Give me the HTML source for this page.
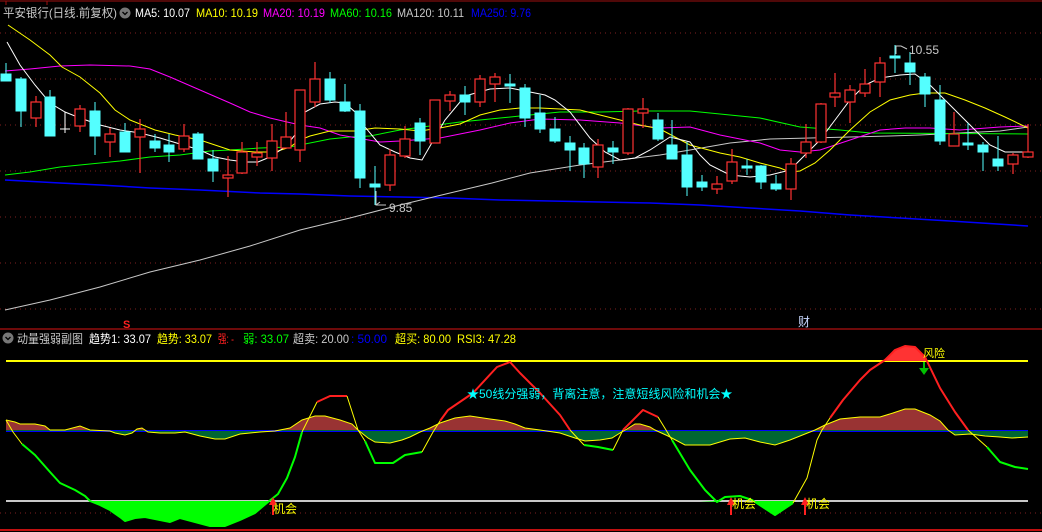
<!DOCTYPE html>
<html><head><meta charset="utf-8"><style>
html,body{margin:0;padding:0;background:#000;width:1042px;height:532px;overflow:hidden}
svg{display:block}
text{font-family:"Liberation Sans","Noto Sans CJK SC",sans-serif;font-size:12px}
</style></head><body>
<svg width="1042" height="532" viewBox="0 0 1042 532" xmlns="http://www.w3.org/2000/svg">
<rect width="1042" height="532" fill="#000"/>
<path d="M0 1H1042" stroke="#a01010" stroke-width="1"/>
<path d="M6 1V5M47 1V5" stroke="#a01010"/>
<g stroke="#802020" stroke-dasharray="1,4" stroke-width="1">
<path d="M0 33H1042M0 79H1042M0 125H1042M0 171H1042M0 217H1042M0 263H1042M0 309H1042"/>
<path d="M0 513H1042"/>
</g>
<text x="3" y="17" fill="#c8c8c8" textLength="114" lengthAdjust="spacingAndGlyphs">平安银行(日线.前复权)</text>
<circle cx="125" cy="13" r="5.5" fill="#777"/><path d="M122.5 12l2.5 2.5 2.5-2.5" stroke="#000" fill="none" stroke-width="1.3"/>
<text x="135" y="17" fill="#fff" textLength="55" lengthAdjust="spacingAndGlyphs">MA5: 10.07</text>
<text x="196" y="17" fill="#ffff00" textLength="62" lengthAdjust="spacingAndGlyphs">MA10: 10.19</text>
<text x="263" y="17" fill="#ff00ff" textLength="62" lengthAdjust="spacingAndGlyphs">MA20: 10.19</text>
<text x="330" y="17" fill="#00ff00" textLength="62" lengthAdjust="spacingAndGlyphs">MA60: 10.16</text>
<text x="397" y="17" fill="#c8c8c8" textLength="67" lengthAdjust="spacingAndGlyphs">MA120: 10.11</text>
<text x="471" y="17" fill="#0000ff" textLength="60" lengthAdjust="spacingAndGlyphs">MA250: 9.76</text>

<g fill="none" stroke-width="1">
<polyline stroke="#0000ff" stroke-width="1.5" points="5,180 60,183 100,185 150,188 200,190 260,193 300,194 350,196 400,197 450,198 500,200 550,201 600,202 650,203 700,205 750,208 800,211 850,215 900,218 950,221 1028,226"/>
<polyline stroke="#c8c8c8" points="5,310 50,300 100,287 150,272 200,260 250,246 300,230 350,218 400,205 450,193 492,183 530,173 580,165 620,160 660,155 690,150 730,143 770,139 810,138 850,137 890,136 920,135 960,133 1000,131 1028,127"/>
<polyline stroke="#00ff00" points="5,175 30,172 60,167 90,164 120,161 150,157 180,155 210,151 230,150 260,148 290,147 310,143 330,139 350,137 370,136 400,130 430,126 460,122 490,119 520,116 560,112 600,112 640,111 690,111 720,114 760,118 800,127 840,130 870,133 1028,134"/>
<polyline stroke="#ff00ff" points="5,71 30,69 60,66 90,65 130,66 150,69 170,77 200,90 230,103 250,112 270,118 300,125 320,128 340,135 380,142 400,141 440,138 480,130 510,123 540,119 580,120 620,123 660,128 690,127 720,135 760,143 780,150 800,152 820,150 850,140 880,130 905,128 930,128 960,130 1000,127 1028,126"/>
<polyline stroke="#ffff00" points="8,25 30,40 50,55 62,67 80,77 100,93 115,110 130,120 155,130 175,135 200,140 230,150 255,152 275,152 290,147 300,140 310,136 330,131 355,131 375,128 400,129 420,131 440,128 460,124 480,115 500,110 520,108 540,108 560,109 580,110 600,115 620,120 640,125 660,129 690,145 720,153 740,157 760,163 780,168 790,172 800,171 815,163 830,150 850,130 870,112 890,100 910,95 925,93 945,93 965,100 985,108 1005,117 1028,128"/>
<polyline stroke="#fff" points="7,42 20,65 35,85 50,103 65,112 80,118 100,125 120,130 140,133 160,138 180,144 200,150 215,157 230,160 245,162 258,162 270,157 285,147 295,135 305,112 320,104 335,102 345,103 355,112 365,127 380,145 395,152 410,158 422,160 445,120 465,96 490,89 510,88 530,92 545,95 555,100 570,112 590,138 605,152 620,160 635,158 650,150 670,137 690,142 700,155 710,165 730,175 750,177 770,175 790,170 805,155 820,140 835,120 850,100 865,85 880,78 900,75 915,74 930,85 950,105 970,125 990,145 1005,152 1028,152"/>
</g>

<g stroke="#54ffff" fill="#54ffff" stroke-width="1">
<path d="M6 63V81M21 77V127M50 90V136M95 102V155M125 123V152M155 134V152M169 134V162M198 132V159M213 150V182M330 72V103M345 84V112M360 104V188M375 166V205M420 118V155M465 86V115M510 74V103M525 84V127M540 95V133M555 117V143M570 136V171M584 143V178M613 141V164M658 113V141M672 120V159M687 142V196M702 175V191M747 159V175M761 165V189M776 175V191M895 45V73M910 52V85M925 73V107M940 85V145M968 123V150M983 142V171M998 136V171"/>
<rect x="1" y="74" width="10" height="7"/><rect x="16" y="79" width="10" height="32"/><rect x="45" y="97" width="10" height="39"/><rect x="90" y="111" width="10" height="25"/><rect x="120" y="132" width="10" height="20"/><rect x="150" y="141" width="10" height="7"/><rect x="164" y="145" width="10" height="7"/><rect x="193" y="134" width="10" height="25"/><rect x="208" y="159" width="10" height="12"/><rect x="325" y="79" width="10" height="21"/><rect x="340" y="102" width="10" height="9"/><rect x="355" y="111" width="10" height="67"/><rect x="370" y="184" width="10" height="3"/><rect x="415" y="123" width="10" height="18"/><rect x="460" y="95" width="10" height="7"/><rect x="505" y="84" width="10" height="2"/><rect x="520" y="88" width="10" height="30"/><rect x="535" y="113" width="10" height="16"/><rect x="550" y="129" width="10" height="12"/><rect x="565" y="143" width="10" height="7"/><rect x="579" y="148" width="10" height="16"/><rect x="608" y="148" width="10" height="4"/><rect x="653" y="120" width="10" height="19"/><rect x="667" y="145" width="10" height="14"/><rect x="682" y="155" width="10" height="32"/><rect x="697" y="182" width="10" height="5"/><rect x="742" y="166" width="10" height="2"/><rect x="756" y="166" width="10" height="16"/><rect x="771" y="184" width="10" height="5"/><rect x="890" y="56" width="10" height="2"/><rect x="905" y="63" width="10" height="9"/><rect x="920" y="77" width="10" height="17"/><rect x="935" y="100" width="10" height="41"/><rect x="963" y="143" width="10" height="2"/><rect x="978" y="145" width="10" height="7"/><rect x="993" y="159" width="10" height="7"/>
</g>
<path d="M65 112V133M60 129H70" stroke="#fff"/>
<g stroke="#ff3232" fill="#000" stroke-width="1.2">
<path d="M36 96V127M80 105V132M110 128V157M140 119V173M184 124V152M228 156V197M242 142V174M257 142V166M272 124V171M286 112V148M300 90V162M315 62V107M390 149V191M405 126V158M435 100V143M450 91V111M480 75V107M495 73V102M598 139V178M628 108V155M643 98V128M717 176V194M732 149V184M791 158V200M806 124V158M821 103V143M835 73V107M850 85V123M865 69V97M880 57V97M954 112V146M1013 153V174M1028 124V158"/>
<rect x="31" y="102" width="10" height="16"/><rect x="75" y="109" width="10" height="17"/><rect x="105" y="134" width="10" height="8"/><rect x="135" y="129" width="10" height="8"/><rect x="179" y="136" width="10" height="13"/><rect x="223" y="175" width="10" height="3"/><rect x="237" y="152" width="10" height="21"/><rect x="252" y="153" width="10" height="4"/><rect x="267" y="141" width="10" height="17"/><rect x="281" y="137" width="10" height="11"/><rect x="295" y="90" width="10" height="60"/><rect x="310" y="79" width="10" height="23"/><rect x="385" y="155" width="10" height="30"/><rect x="400" y="139" width="10" height="17"/><rect x="430" y="100" width="10" height="43"/><rect x="445" y="95" width="10" height="6"/><rect x="475" y="79" width="10" height="23"/><rect x="490" y="77" width="10" height="7"/><rect x="593" y="145" width="10" height="22"/><rect x="623" y="109" width="10" height="44"/><rect x="638" y="109" width="10" height="4"/><rect x="712" y="184" width="10" height="5"/><rect x="727" y="162" width="10" height="19"/><rect x="786" y="164" width="10" height="25"/><rect x="801" y="142" width="10" height="11"/><rect x="816" y="104" width="10" height="38"/><rect x="830" y="93" width="10" height="4"/><rect x="845" y="90" width="10" height="12"/><rect x="860" y="84" width="10" height="9"/><rect x="875" y="63" width="10" height="19"/><rect x="949" y="134" width="10" height="12"/><rect x="1008" y="155" width="10" height="9"/><rect x="1023" y="152" width="10" height="5"/>
</g>
<path d="M376 191V205H386M376 205l4-3" stroke="#c8c8c8" fill="none"/>
<text x="389" y="212" fill="#c8c8c8">9.85</text>
<path d="M896 54V46H901l6 3" stroke="#c8c8c8" fill="none"/>
<text x="909" y="54" fill="#c8c8c8">10.55</text>
<text x="123" y="328" fill="#ff2020" font-weight="bold" style="font-size:11px">S</text>
<text x="798" y="326" fill="#c8d8ff" style="font-size:12px">财</text>
<path d="M0 329H1042" stroke="#b01010" stroke-width="1.2"/>
<path d="M0 530H1042" stroke="#c01010" stroke-width="2"/>

<circle cx="8" cy="338" r="5.5" fill="#777"/><path d="M5.5 337l2.5 2.5 2.5-2.5" stroke="#000" fill="none" stroke-width="1.3"/>
<text x="17" y="343" fill="#c8c8c8" textLength="66" lengthAdjust="spacingAndGlyphs">动量强弱副图</text>
<text x="89" y="343" fill="#fff" textLength="62" lengthAdjust="spacingAndGlyphs">趋势1: 33.07</text>
<text x="157" y="343" fill="#ffff00" textLength="55" lengthAdjust="spacingAndGlyphs">趋势: 33.07</text>
<text x="218" y="343" fill="#ff2020" textLength="16" lengthAdjust="spacingAndGlyphs">强: -</text>
<text x="243" y="343" fill="#00ff00" textLength="46" lengthAdjust="spacingAndGlyphs">弱: 33.07</text>
<text x="293" y="343" fill="#c8c8c8" textLength="56" lengthAdjust="spacingAndGlyphs">超卖: 20.00</text>
<text x="351" y="343" fill="#0000ff" textLength="36" lengthAdjust="spacingAndGlyphs">: 50.00</text>
<text x="395" y="343" fill="#ffff00" textLength="56" lengthAdjust="spacingAndGlyphs">超买: 80.00</text>
<text x="457" y="343" fill="#ffff00" textLength="59" lengthAdjust="spacingAndGlyphs">RSI3: 47.28</text>

<defs>
<clipPath id="ab"><rect x="0" y="350" width="1042" height="81"/></clipPath>
<clipPath id="be"><rect x="0" y="430" width="1042" height="80"/></clipPath>
<clipPath id="lo"><rect x="0" y="501" width="1042" height="30"/></clipPath>
<clipPath id="hi"><rect x="0" y="330" width="1042" height="31"/></clipPath>
</defs>
<path d="M6 431H1028" stroke="#0000ff" stroke-width="2"/>
<g>
<polygon clip-path="url(#ab)" fill="#993333" points="6,431 6,420 15,422 20,424 35,424 45,426 50,430 65,430 80,426 90,430 110,431 115,433 125,435 132,433 137,429 142,428 148,432 160,433 175,433 185,432 200,436 215,439 225,439 240,434 260,432 275,431 290,428 302,420 315,416 325,416 340,420 352,424 358,430 368,438 375,442 390,443 402,440 410,437 420,432 430,428 440,423 455,418 470,416 490,419 505,421 515,424 525,428 540,430 560,433 575,438 585,441 600,440 612,438 620,433 627,429 635,424 640,424 650,427 655,430 668,436 685,445 710,445 730,439 745,438 760,442 775,445 790,440 805,434 815,430 825,425 840,419 860,417 880,417 893,413 905,409 915,409 930,415 940,421 948,430 955,435 970,434 985,436 1000,437 1012,438 1028,437 1028,431"/>
<polygon clip-path="url(#be)" fill="#006633" points="6,431 6,420 15,422 20,424 35,424 45,426 50,430 65,430 80,426 90,430 110,431 115,433 125,435 132,433 137,429 142,428 148,432 160,433 175,433 185,432 200,436 215,439 225,439 240,434 260,432 275,431 290,428 302,420 315,416 325,416 340,420 352,424 358,430 368,438 375,442 390,443 402,440 410,437 420,432 430,428 440,423 455,418 470,416 490,419 505,421 515,424 525,428 540,430 560,433 575,438 585,441 600,440 612,438 620,433 627,429 635,424 640,424 650,427 655,430 668,436 685,445 710,445 730,439 745,438 760,442 775,445 790,440 805,434 815,430 825,425 840,419 860,417 880,417 893,413 905,409 915,409 930,415 940,421 948,430 955,435 970,434 985,436 1000,437 1012,438 1028,437 1028,431"/>
<polyline fill="none" stroke="#ffff00" stroke-width="1" points="6,420 15,422 20,424 35,424 45,426 50,430 65,430 80,426 90,430 110,431 115,433 125,435 132,433 137,429 142,428 148,432 160,433 175,433 185,432 200,436 215,439 225,439 240,434 260,432 275,431 290,428 302,420 315,416 325,416 340,420 352,424 358,430 368,438 375,442 390,443 402,440 410,437 420,432 430,428 440,423 455,418 470,416 490,419 505,421 515,424 525,428 540,430 560,433 575,438 585,441 600,440 612,438 620,433 627,429 635,424 640,424 650,427 655,430 668,436 685,445 710,445 730,439 745,438 760,442 775,445 790,440 805,434 815,430 825,425 840,419 860,417 880,417 893,413 905,409 915,409 930,415 940,421 948,430 955,435 970,434 985,436 1000,437 1012,438 1028,437"/>
</g>
<path d="M6 361H1028" stroke="#ffff00" stroke-width="2"/>
<path d="M6 501H1028" stroke="#c8c8c8" stroke-width="2"/>
<polygon clip-path="url(#lo)" fill="#00ff00" points="22,444 35,455 50,472 60,483 75,490 85,496 90,501 100,505 110,510 120,517 125,521 135,518 145,517 160,520 170,522 180,518 195,522 210,526 225,526 240,520 255,513 268,502 278,494 278,501 700,501 717,502 725,497 740,496 752,500 775,515 793,503 800,496 800,501 22,501"/>
<polygon clip-path="url(#hi)" fill="#ff3333" points="870,370 885,360 895,350 905,346 915,347 925,357 940,388 870,388"/>
<g fill="none" stroke-linejoin="round">
<polyline stroke="#ffff00" stroke-width="1" points="6,420 13,432 22,444"/>
<polyline stroke="#00ff00" stroke-width="2" points="22,444 35,455 50,472 60,483 75,490 85,496 90,501 100,505 110,510 120,517 125,521 135,518 145,517 160,520 170,522 180,518 195,522 210,526 225,526 240,520 255,513 268,502 278,494 287,478 295,457 302,432"/>
<polyline stroke="#ffff00" stroke-width="1" points="302,432 317,402"/>
<polyline stroke="#ff2020" stroke-width="2" points="317,402 330,396 347,396"/>
<polyline stroke="#ffff00" stroke-width="1" points="347,396 358,430 365,441"/>
<polyline stroke="#00ff00" stroke-width="2" points="365,441 375,463 393,463 405,455 422,452"/>
<polyline stroke="#ffff00" stroke-width="1" points="422,452 433,432 440,421"/>
<polyline stroke="#ff2020" stroke-width="2" points="440,421 448,410 473,393 497,367 510,362 520,373 540,393 560,415 570,430"/>
<polyline stroke="#ffff00" stroke-width="1" points="570,430 584,445"/>
<polyline stroke="#00ff00" stroke-width="2" points="584,445 598,447 613,450"/>
<polyline stroke="#ffff00" stroke-width="1" points="613,450 623,430"/>
<polyline stroke="#ff2020" stroke-width="2" points="623,430 643,410 658,417"/>
<polyline stroke="#ffff00" stroke-width="1" points="658,417 666,430 672,440"/>
<polyline stroke="#00ff00" stroke-width="2" points="672,440 690,470 705,490 717,502 725,497 740,496 752,500 775,515 793,503"/>
<polyline stroke="#ffff00" stroke-width="1" points="793,503 807,478 817,440 822,430 830,418"/>
<polyline stroke="#ff2020" stroke-width="2" points="830,418 843,400 860,380 870,370 885,360 895,350 905,346 915,347 925,357 940,388 955,412 968,430"/>
<polyline stroke="#ffff00" stroke-width="1" points="968,430 987,447"/>
<polyline stroke="#00ff00" stroke-width="2" points="987,447 1000,462 1015,467 1028,469"/>
</g>
<text x="467" y="398" fill="#00ffff">★50线分强弱，背离注意，注意短线风险和机会★</text>
<text x="923" y="357" fill="#ffff00" style="font-size:11px">风险</text>
<path d="M924 362V370" stroke="#00c000" stroke-width="2"/><path d="M919 368L924 375L929 368Z" fill="#00c000"/>
<g fill="#ff2020" stroke="#ff2020" stroke-width="2">
<path d="M273 503V515M731 503V515M805 503V515"/>
<path d="M269 505L273 497L277 505Z" stroke="none"/><path d="M727 505L731 497L735 505Z" stroke="none"/><path d="M801 505L805 497L809 505Z" stroke="none"/>
</g>
<text x="273" y="513" fill="#ffff00">机会</text>
<text x="732" y="508" fill="#ffff00">机会</text>
<text x="806" y="508" fill="#ffff00">机会</text>
</svg>
</body></html>
